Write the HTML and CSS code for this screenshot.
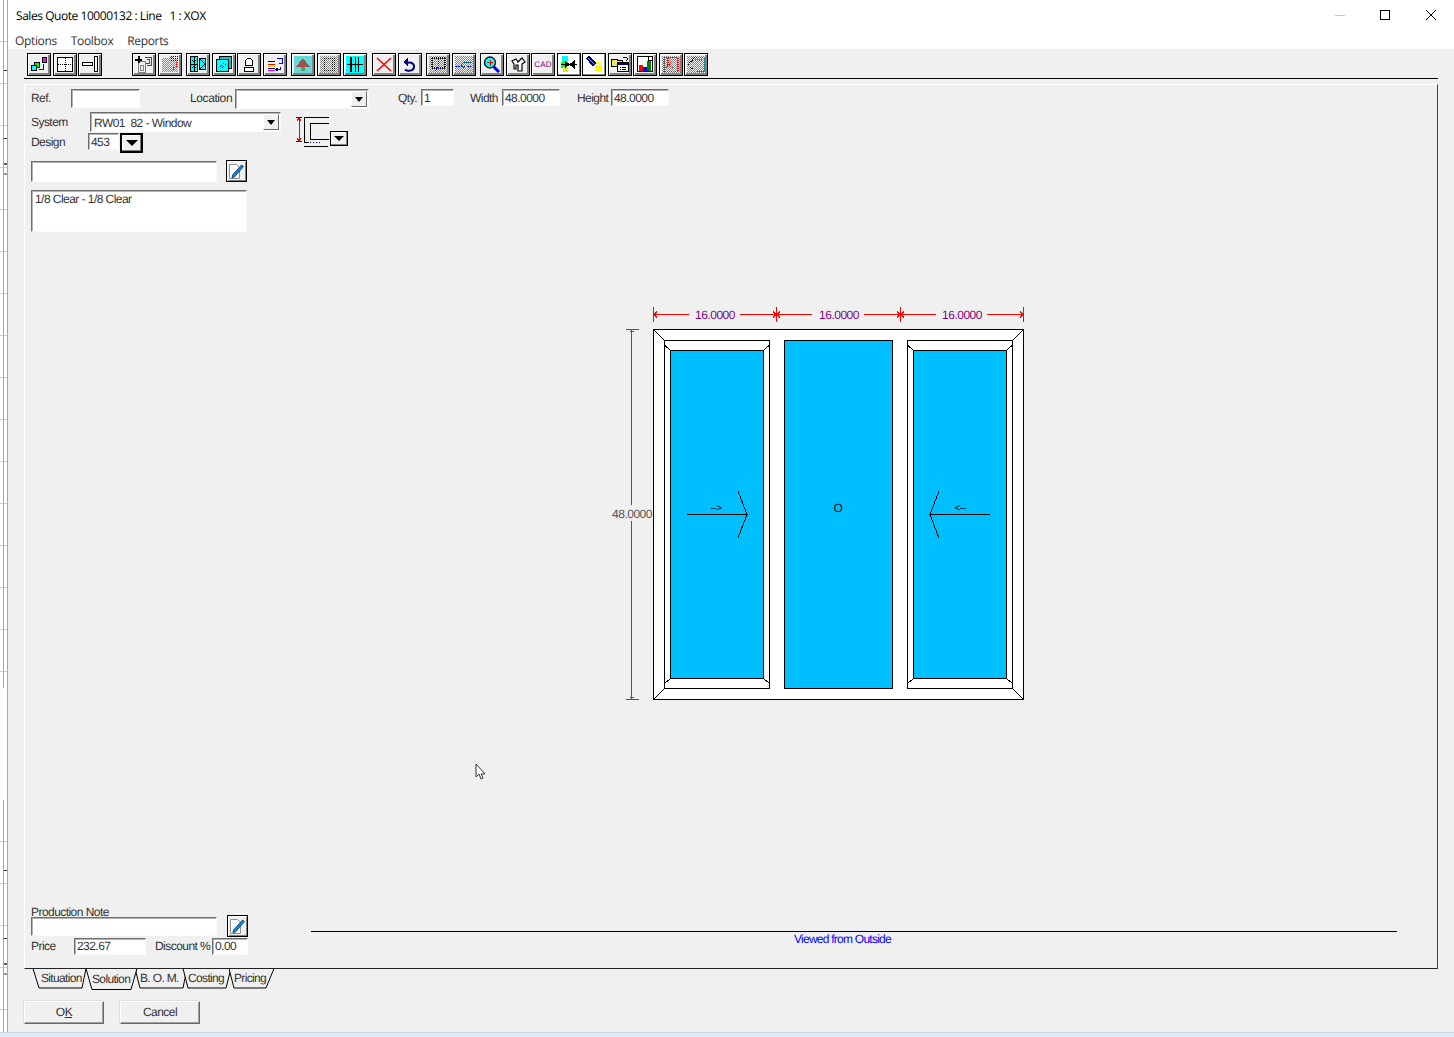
FILE: index.html
```html
<!DOCTYPE html>
<html lang="en">
<head>
  <meta charset="UTF-8" />
  <title>Sales Quote 10000132</title>
  <link rel="stylesheet" href="styles.css">
</head>
<body>
  <div class="strip">
    <div class="strip-grid"></div>
    <div class="strip-gap"></div>
    <div class="strip-grid strip-low"></div>
  </div>

  <div class="window">
    <div class="titlebar">
      <span class="title">Sales Quote 10000132 : Line   1 : XOX</span>
      <span class="winbtns">
        <svg width="111" height="31" viewBox="0 0 111 31">
          <path d="M0 15.5h10" stroke="#c8c8c8" fill="none" />
          <rect x="45.5" y="10.5" width="9" height="9" fill="none" stroke="#000" />
          <path d="M91 10l10 10M101 10l-10 10" stroke="#000" fill="none" />
        </svg>
      </span>
    </div>
    <div class="menubar">
      <span>Options</span>
      <span>Toolbox</span>
      <span>Reports</span>
    </div>

    <div class="toolbar">
      <button class="tb">
        <svg viewBox="0 0 18 17">
          <defs>
            <pattern id="dith" width="2" height="2" patternUnits="userSpaceOnUse">
              <rect width="2" height="2" fill="#f0f0f0" />
              <rect width="1" height="1" fill="#8a8a8a" />
              <rect x="1" y="1" width="1" height="1" fill="#8a8a8a" />
            </pattern>
            <pattern id="dots" width="2" height="2" patternUnits="userSpaceOnUse">
              <rect width="1" height="1" fill="#000" />
            </pattern>
          </defs>
          <rect x="4.5" y="6.5" width="5" height="5" fill="#0f0" stroke="#000" />
          <rect x="1.5" y="9.5" width="5" height="5" fill="#0ff" stroke="#000" />
          <rect x="12.5" y="1.5" width="4" height="5" fill="#f0f" stroke="#000" />
          <path d="M13.5 8v5.5H9" stroke="#00f" fill="none" />
        </svg>
      </button>
      <button class="tb tight">
        <svg viewBox="0 0 18 17">
          <rect x="1.5" y="1.5" width="15" height="14" fill="#fff" stroke="#000" />
          <path d="M2 8.5h14M9 2v13" stroke="#000" stroke-dasharray="1 1" fill="none" />
        </svg>
      </button>
      <button class="tb gap-wide">
        <svg viewBox="0 0 18 17">
          <rect x="1.5" y="6.5" width="10" height="3" fill="#fff" stroke="#000" />
          <rect x="13.5" y="0.5" width="3" height="15" fill="#fff" stroke="#000" />
        </svg>
      </button>

      <button class="tb">
        <svg viewBox="0 0 18 17">
          <rect x="3.5" y="5.5" width="7" height="11" fill="none" stroke="#808080" />
          <rect x="5.5" y="9.5" width="3" height="5" fill="none" stroke="#808080" />
          <path d="M10 1.5h6.5v8H12M11.5 3.5h3v4H11" stroke="#f00" fill="none" />
          <path d="M0 3.5h7M3.5 0v7" stroke="#000" stroke-width="2" fill="none" />
        </svg>
      </button>
      <button class="tb gap-mid">
        <svg viewBox="0 0 18 17">
          <rect x="1" y="2" width="16" height="14" fill="url(#dith)" />
          <rect x="10" y="0" width="7" height="5" fill="url(#dots)" />
          <path d="M9 1h3M15 6v5h-3v3h-2" stroke="#f00" stroke-dasharray="1 1" fill="none" />
        </svg>
      </button>

      <button class="tb">
        <svg viewBox="0 0 18 17">
          <rect x="1.5" y="0.5" width="7" height="15" fill="#0ff" stroke="#000" />
          <rect x="10.5" y="2.5" width="6" height="11" fill="#0ff" stroke="#000" />
          <path d="M5 1v14M3 4l2 2 2-2M3 12l2-2 2 2M2 8h6" stroke="#000" fill="none" />
          <path d="M11 3l5 5-5 5" stroke="#000" fill="none" />
        </svg>
      </button>
      <button class="tb tight">
        <svg viewBox="0 0 18 17">
          <rect x="4.5" y="0.5" width="12" height="12" fill="#0cc" stroke="#000" />
          <rect x="1.5" y="3.5" width="12" height="12" fill="#0ff" stroke="#000" />
          <path d="M5 11l4-4M7 12l4-4" stroke="#00f" stroke-dasharray="1 1" fill="none" />
        </svg>
      </button>
      <button class="tb">
        <svg viewBox="0 0 18 17">
          <path d="M5.5 9.5V4.5l2-2h3l2 2v5z" fill="#fff" stroke="#000" />
          <rect x="4.5" y="11.5" width="9" height="4" fill="#fff" stroke="#000" />
        </svg>
      </button>
      <button class="tb gap-mid">
        <svg viewBox="0 0 18 17">
          <path d="M2 5.5h7" stroke="#000" fill="none" />
          <path d="M2 8.5h7" stroke="#f00" fill="none" />
          <path d="M2 10.5h7" stroke="#e8e800" fill="none" />
          <path d="M2 12.5h7" stroke="#00f" fill="none" />
          <path d="M2 14.5h7" stroke="#f0f" fill="none" />
          <path d="M11 2.5h5.5v5H13M14 10.5v3h-3" stroke="#00f" fill="none" />
          <path d="M12 12l-2 1.5 2 1.5" stroke="#000" fill="none" />
        </svg>
      </button>
      <button class="tb">
        <svg viewBox="0 0 18 17">
          <rect x="0" y="0" width="18" height="17" fill="#66d9d9" />
          <path d="M9 2l7 9H2z" fill="#a05050" />
          <path d="M7 11h4v4H7z" fill="#58a058" />
        </svg>
      </button>
      <button class="tb">
        <svg viewBox="0 0 18 17">
          <rect x="0" y="0" width="18" height="17" fill="url(#dith)" />
          <rect x="3" y="1" width="12" height="15" fill="url(#dots)" />
          <rect x="6" y="3" width="6" height="11" fill="#f0f0f0" />
          <rect x="6" y="3" width="6" height="11" fill="url(#dith)" />
        </svg>
      </button>
      <button class="tb gap-big">
        <svg viewBox="0 0 18 17">
          <rect x="0" y="0" width="18" height="17" fill="#0ff" />
          <path d="M4.5 1v15M5.5 1v15M9.5 1v15M12.5 1v15M1 8.5h16" stroke="#000" fill="none" />
        </svg>
      </button>

      <button class="tb">
        <svg viewBox="0 0 18 17">
          <path d="M2 2l14 13M16 2L2 15" stroke="#f00" stroke-width="1.6" fill="none" shape-rendering="auto" />
        </svg>
      </button>
      <button class="tb gap-mid">
        <svg viewBox="0 0 18 17">
          <path d="M4 13.5c2 2 9 2 9-3 0-4-5-5-8-3" stroke="#000080" stroke-width="2" fill="none" shape-rendering="auto" />
          <path d="M7 1v10L2 6z" fill="#000080" />
        </svg>
      </button>

      <button class="tb">
        <svg viewBox="0 0 18 17">
          <rect x="0" y="0" width="18" height="17" fill="url(#dith)" />
          <path d="M2.5 2h13M2.5 12h13M2.5 2v10M15.5 2v10" stroke="#000" stroke-width="2" stroke-dasharray="1 1" fill="none" />
          <path d="M9 3v9M6 15l3-4 3 4" stroke="#00f" stroke-dasharray="1 1" fill="none" />
        </svg>
      </button>
      <button class="tb gap-mid">
        <svg viewBox="0 0 18 17">
          <rect x="0" y="0" width="18" height="17" fill="url(#dith)" />
          <path d="M0 10.5h16" stroke="#00f" stroke-dasharray="2 1" fill="none" />
          <path d="M16 6.5h-7M9 6l-3 3 3 3" stroke="#006060" fill="none" />
          <rect x="10" y="10" width="2" height="2" fill="#e8e800" />
        </svg>
      </button>

      <button class="tb">
        <svg viewBox="0 0 18 17">
          <path d="M10 10l6 6" stroke="#00f" stroke-width="3" fill="none" shape-rendering="auto" />
          <circle cx="7" cy="6.5" r="5.5" fill="#0ff" stroke="#000" stroke-width="1.3" shape-rendering="auto" />
          <path d="M4 6.5h6M7 3.5v6" stroke="#f00" fill="none" />
        </svg>
      </button>
      <button class="tb tight">
        <svg viewBox="0 0 18 17">
          <path d="M3 5l4-2 2 3 4-4 3 4-3 2v7h-4V9L7 9v4H5V8z" fill="#fff" stroke="#000" stroke-width="1.2" shape-rendering="auto" />
        </svg>
      </button>
      <button class="tb">
        <svg viewBox="0 0 18 17">
          <text x="9" y="11" class="cad">CAD</text>
        </svg>
      </button>
      <button class="tb tb-flat tight">
        <svg viewBox="0 0 18 17">
          <rect x="2" y="0" width="6" height="8" fill="#0ff" />
          <rect x="1" y="6" width="6" height="6" fill="#0f0" />
          <rect x="3" y="11" width="5" height="5" fill="#e8e800" />
          <path d="M1 8.5h6M5 5l4 3.5-4 3.5zM12 8.5h5M14 5l-4 3.5 4 3.5z" fill="#000" stroke="#000" />
        </svg>
      </button>
      <button class="tb tb-flat">
        <svg viewBox="0 0 18 17">
          <path d="M1 2l3-2 7 7-3 4z" fill="#000080" />
          <path d="M3 2l6 6" stroke="#8ac" fill="none" />
          <rect x="10" y="9" width="7" height="7" fill="#ff0" />
          <rect x="0" y="15" width="18" height="1" fill="#fff" />
          <path d="M11 6h6M12 8h5" stroke="#ff0" stroke-dasharray="1 1" fill="none" />
        </svg>
      </button>
      <button class="tb tight">
        <svg viewBox="0 0 18 17">
          <path d="M0 3.5h6l1 1h4v6H0z" fill="#e8e860" stroke="#000" />
          <path d="M12 1h3l2 2-2 2" stroke="#000" fill="none" />
          <rect x="6.5" y="6.5" width="11" height="9" fill="#fff" stroke="#000" />
          <rect x="7" y="7" width="10" height="2" fill="#000080" />
          <path d="M9 11h1M11 11h4M9 13h1M11 13h4" stroke="#000" fill="none" />
        </svg>
      </button>
      <button class="tb">
        <svg viewBox="0 0 18 17">
          <rect x="1.5" y="0.5" width="15" height="15" fill="#fff" stroke="#000" />
          <rect x="3" y="9" width="4" height="6" fill="#f00" />
          <rect x="7" y="11" width="4" height="4" fill="#00f" />
          <rect x="11" y="5" width="4" height="10" fill="#008000" />
          <path d="M12 1v3h4" stroke="#000" fill="none" />
        </svg>
      </button>
      <button class="tb tight">
        <svg viewBox="0 0 18 17">
          <rect x="0" y="0" width="18" height="17" fill="url(#dith)" />
          <path d="M2 1.5h14v14H2zM6 2v7l4-3M4 12l3-3 5 4" stroke="#f00" stroke-width="1.4" stroke-dasharray="1 1" fill="none" />
        </svg>
      </button>
      <button class="tb">
        <svg viewBox="0 0 18 17">
          <rect x="0" y="0" width="18" height="17" fill="url(#dith)" />
          <path d="M5 1.5h12v14H9" stroke="#006060" stroke-dasharray="1 1" fill="none" />
          <path d="M7 2L1 9l6 6" stroke="#000" stroke-dasharray="1 1" stroke-width="1.4" fill="none" />
          <path d="M8 4h7" stroke="#808000" stroke-width="2" stroke-dasharray="1 1" fill="none" />
        </svg>
      </button>
    </div>
    <div class="toolrule"></div>

    <div class="panel">
      <div class="row-top">
        <label class="lb-ref">Ref.</label>
        <input class="sunken in-ref" type="text">
        <label class="lb-loc">Location</label>
        <div class="sunken combo in-loc"><span></span><i class="drop"></i></div>
        <label class="lb-qty">Qty.</label>
        <input class="sunken in-qty" type="text" value="1">
        <label class="lb-width">Width</label>
        <input class="sunken in-dim" type="text" value="48.0000">
        <label class="lb-height">Height</label>
        <input class="sunken in-dim" type="text" value="48.0000">
      </div>

      <div class="content">
        <div class="side">
          <div class="upper">
            <div class="upper-left">
              <div class="row row-system">
                <label class="lb-system">System</label>
                <div class="sunken combo in-system"><span>RW01  82 - Window</span><i class="drop"></i></div>
              </div>
              <div class="row row-design">
                <label class="lb-design">Design</label>
                <input class="sunken in-design" type="text" value="453">
                <button class="design-btn"><i class="arrow"></i></button>
              </div>
              <div class="row row-note">
                <input class="sunken in-note" type="text">
                <button class="edit-btn">
                  <svg width="17" height="18" viewBox="0 0 17 18">
                    <path d="M1.5 16.5V2.5h7l3 3v11z" fill="#fcfcfc" stroke="#909090" />
                    <path d="M4 16l.5-3 9-10 2 1.500-9 10.500z" fill="#0a84e0" stroke="#002850" stroke-width=".7" />
                  </svg>
                </button>
              </div>
              <textarea class="sunken glass">1/8 Clear - 1/8 Clear</textarea>
            </div>
            <div class="profile">
              <svg width="52" height="30" viewBox="0 0 52 30">
                <path d="M0 .5h6M0 24.500h6" stroke="#00f" fill="none" />
                <path d="M3 1v23M1 4l2-3 2 3M1 21l2 3 2-3" stroke="#f00" fill="none" />
                <path d="M8.500 0v25M33 .5H8M33 6.500H14.500v16H33M8 25.500h5M8 29.500h24" stroke="#000" fill="none" />
                <path d="M14 25.500h12" stroke="#00f" stroke-dasharray="1 2" fill="none" />
              </svg>
              <button class="profile-btn"><i class="arrow"></i></button>
            </div>
          </div>

          <div class="lower">
            <label class="lb-prod">Production Note</label>
            <div class="row row-prod">
              <input class="sunken in-note in-prod" type="text">
              <button class="edit-btn edit-prod">
                <svg width="17" height="18" viewBox="0 0 17 18">
                  <path d="M1.5 16.5V2.5h7l3 3v11z" fill="#fcfcfc" stroke="#909090" />
                  <path d="M4 16l.5-3 9-10 2 1.500-9 10.500z" fill="#0a84e0" stroke="#002850" stroke-width=".7" />
                </svg>
              </button>
            </div>
            <div class="row row-price">
              <label class="lb-price">Price</label>
              <input class="sunken in-price" type="text" value="232.67">
              <label class="lb-disc">Discount %</label>
              <input class="sunken in-disc" type="text" value="0.00">
            </div>
          </div>
        </div>

        <div class="view">
          <svg class="drawing" width="420" height="410" viewBox="610 300 420 410">
            <!-- frame -->
            <rect x="653.5" y="329.5" width="370" height="370" fill="#fff" stroke="#000" />
            <path d="M653.5 329.5l11 11M1023.5 329.5l-11 11M653.5 699.5l11-11M1023.5 699.5l-11-11" stroke="#000" fill="none" />

            <!-- left sash -->
            <rect x="664.5" y="340.5" width="105" height="348" fill="#fff" stroke="#000" />
            <rect x="670.5" y="350.5" width="93" height="328" fill="#00bfff" stroke="#000" />
            <path d="M664.5 345l6 5.5M769.5 345l-6 5.5M664.5 683.5l6-5M769.5 683.5l-6-5" stroke="#000" fill="none" />

            <!-- fixed lite -->
            <rect x="784.5" y="340.5" width="108" height="348" fill="#00bfff" stroke="#000" />

            <!-- right sash -->
            <rect x="907.5" y="340.5" width="105" height="348" fill="#fff" stroke="#000" />
            <rect x="913.5" y="350.5" width="93" height="328" fill="#00bfff" stroke="#000" />
            <path d="M907.5 345l6 5.5M1012.5 345l-6 5.5M907.5 683.5l6-5M1012.5 683.5l-6-5" stroke="#000" fill="none" />

            <!-- slide arrows -->
            <path d="M687 514.5h60M738 491l9 23.5-9 23.5" stroke="#000" fill="none" />
            <path d="M990 514.5h-60M939 491l-9 23.5 9 23.5" stroke="#000" fill="none" />
            <text class="mark" x="716" y="511">--&gt;</text>
            <text class="mark mark-o" x="838" y="512">O</text>
            <text class="mark" x="960" y="511">&lt;--</text>

            <!-- width dims -->
            <g stroke="#f00" fill="none">
              <path d="M653.5 307v15M776.5 307v15M900.5 307v15M1023.5 307v15" />
              <path d="M653 314.5h36M740 314.5h72M864 314.5h72M987 314.5h37" />
              <path d="M654 314.5l3-3M654 314.5l3 3M773 311.5l3 3-3 3M780 311.5l-3 3 3 3M897 311.5l3 3-3 3M904 311.5l-3 3 3 3M1023 314.5l-3-3M1023 314.5l-3 3" />
            </g>
            <text class="dim" x="715" y="319">16.0000</text>
            <text class="dim" x="839" y="319">16.0000</text>
            <text class="dim" x="962" y="319">16.0000</text>

            <!-- height dim -->
            <g stroke="#555" fill="none">
              <path d="M626 329.5h13M626 699.5h13" />
              <path d="M631.5 330v175M631.5 521v178" />
              <path d="M629.5 331.5h4M629.5 697.5h4" />
            </g>
            <text class="dim-h" x="632" y="518">48.0000</text>
          </svg>

          <div class="viewrule"></div>
          <div class="caption">Viewed from Outside</div>
        </div>
      </div>

      <svg class="cursor" width="12" height="18" viewBox="0 0 12 18">
        <path d="M1 1v13l3-3 2 5 2-1-2-4h4z" fill="#fff" stroke="#333" />
      </svg>
    </div>

    <svg class="tabs" width="260" height="24" viewBox="24 968 260 24">
      <g fill="#f0f0f0" stroke="#000">
        <path d="M33 968.5l6 19.5h43l4-19.5" />
        <path d="M135 968.5l5 19.5h43l4-19.5" />
        <path d="M183 968.5l5 19.5h38l5-19.5" />
        <path d="M229 968.5l5 19.5h32l8-19.5" />
        <path d="M86 968.5l6 21h39l6-21" />
      </g>
      <text class="tabtext" x="41" y="982">Situation</text>
      <text class="tabtext" x="92" y="983">Solution</text>
      <text class="tabtext" x="140" y="982">B. O. M.</text>
      <text class="tabtext" x="188" y="982">Costing</text>
      <text class="tabtext" x="234" y="982">Pricing</text>
    </svg>

    <div class="actions">
      <button class="action">O<u>K</u></button>
      <button class="action">Cancel</button>
    </div>
  </div>

  <div class="taskstrip"></div>
</body>
</html>
```

FILE: styles.css
```css
html,
body {
  margin: 0;
  height: 1037px;
  overflow: hidden;
}
body {
  display: grid;
  grid-template-columns: 8px 1fr;
  grid-template-rows: 1032px 5px;
  background: #f0f0f0;
  font-family: "Liberation Sans", Arial, sans-serif;
  font-size: 12px;
  letter-spacing: -0.55px;
  color: #333;
  text-rendering: geometricPrecision;
}
button,
input,
textarea {
  font: inherit;
  letter-spacing: inherit;
  color: inherit;
  text-rendering: inherit;
}

/* window behind this one */
.strip {
  display: flex;
  flex-direction: column;
  background: #fff;
  border-right: 1px solid #a8a8a8;
  box-sizing: border-box;
}
.strip-grid {
  height: 688px;
  background:
    linear-gradient(#333, #333) 4px 70px / 3px 1px no-repeat,
    linear-gradient(#333, #333) 4px 138px / 3px 1px no-repeat,
    linear-gradient(#666, #666) 4px 163px / 3px 2px no-repeat,
    linear-gradient(#999, #999) 4px 173px / 3px 2px no-repeat,
    linear-gradient(90deg, transparent 3px, #a8a8a8 3px, #a8a8a8 4px, transparent 4px),
    repeating-linear-gradient(#fff 0, #fff 41px, #d0d0d0 41px, #d0d0d0 42px);
}
.strip-gap {
  height: 112px;
}
.strip-low {
  flex: 1;
  height: auto;
}

.window {
  display: flex;
  flex-direction: column;
  min-width: 0;
}
.titlebar {
  height: 31px;
  background: #fff;
  display: flex;
  align-items: center;
  padding-left: 8px;
  font-family: "Open Sans", sans-serif;
  letter-spacing: -0.45px;
  color: #000;
}
.title {
  white-space: pre;
}
.winbtns {
  margin-left: auto;
  margin-right: 8px;
  height: 31px;
}
.menubar {
  height: 18px;
  background: #fff;
  display: flex;
  gap: 14px;
  padding-left: 7px;
  font-family: "Open Sans", sans-serif;
  letter-spacing: -0.35px;
  line-height: 20px;
}

.toolbar {
  display: flex;
  padding: 4px 0 2px 19px;
}
.tb {
  width: 24px;
  height: 23px;
  margin-right: 2px;
  padding: 0;
  box-sizing: border-box;
  display: flex;
  align-items: center;
  justify-content: center;
  background: #f0f0f0;
  border: 1px solid #000;
  box-shadow: inset 1px 1px 0 #fff, inset -2px -2px 0 #808080;
}
.tb svg {
  width: 18px;
  height: 17px;
  margin: -1px 0 0 -1px;
  shape-rendering: crispEdges;
  overflow: hidden;
}
.tb-flat {
  background: #fff;
  box-shadow: inset -1px -1px 0 #808080;
}
.tight {
  margin-right: 1px;
}
.gap-mid {
  margin-right: 4px;
}
.gap-big {
  margin-right: 5px;
}
.gap-wide {
  margin-right: 30px;
}
.cad {
  font-family: "Liberation Sans", sans-serif;
  font-size: 8px;
  letter-spacing: 0.2px;
  fill: #800080;
  text-anchor: middle;
}
.toolrule {
  height: 1px;
  margin: 0 16px;
  background: #000;
}

/* main tab page */
.panel {
  position: relative;
  height: 885px;
  margin: 5px 16px 0;
  box-sizing: border-box;
  border-left: 1px solid #fff;
  border-top: 1px solid #fff;
  border-right: 1px solid #444;
  border-bottom: 1px solid #222;
  display: flex;
  flex-direction: column;
  padding: 4px 0 0 6px;
}
label {
  white-space: nowrap;
}
.sunken {
  box-sizing: border-box;
  display: block;
  padding: 0 2px;
  margin: 0;
  background: #fff;
  border: 1px solid;
  border-color: #6e6e6e #fbfbfb #fbfbfb #6e6e6e;
  box-shadow: inset 1px 1px 0 #b4b4b4;
  outline: none;
  border-radius: 0;
  white-space: pre;
}
.row-top {
  display: flex;
  align-items: flex-start;
  height: 23px;
}
.row-top label {
  line-height: 18px;
}
.lb-ref {
  width: 40px;
}
.in-ref {
  width: 69px;
  height: 19px;
}
.lb-loc {
  width: 45px;
  margin-left: 50px;
  letter-spacing: -0.4px;
}
.in-loc {
  width: 134px;
  height: 20px;
}
.lb-qty {
  width: 23px;
  margin-left: 29px;
}
.in-qty {
  width: 33px;
  height: 17px;
}
.lb-width {
  width: 32px;
  margin-left: 16px;
}
.in-dim {
  width: 58px;
  height: 17px;
}
.lb-height {
  width: 34px;
  margin-left: 17px;
}
.combo {
  display: flex;
  align-items: center;
  justify-content: space-between;
  padding-right: 1px;
}
.in-system span {
  padding: 1px 0 0 1px;
}
.drop {
  width: 16px;
  height: 16px;
  box-sizing: border-box;
  background: #f0f0f0;
  border: 1px solid;
  border-color: #fff #696969 #696969 #fff;
  display: flex;
  align-items: center;
  justify-content: center;
}
.drop::after,
.arrow {
  display: block;
  width: 0;
  height: 0;
  border: 4px solid transparent;
  border-top: 5px solid #000;
  border-bottom: 0;
  content: "";
}
.arrow {
  border-width: 6px 6px 0;
  border-top-color: #000;
}

.content {
  flex: 1;
  display: flex;
  min-height: 0;
}
.side {
  width: 280px;
  flex: none;
  display: flex;
  flex-direction: column;
  justify-content: space-between;
  padding-bottom: 13px;
}
.upper {
  display: flex;
}
.upper-left {
  width: 265px;
  flex: none;
}
.row {
  display: flex;
  align-items: center;
}
.row-system {
  height: 20px;
  margin-bottom: 1px;
}
.lb-system {
  width: 59px;
}
.in-system {
  width: 191px;
  height: 20px;
}
.row-design {
  height: 20px;
  align-items: flex-start;
  margin-bottom: 7px;
}
.row-design label {
  line-height: 19px;
}
.lb-design {
  width: 57px;
}
.in-design {
  width: 31px;
  height: 17px;
}
.design-btn {
  width: 23px;
  height: 20px;
  margin-left: 1px;
  padding: 0;
  box-sizing: border-box;
  background: #f0f0f0;
  border: 2px solid #000;
  box-shadow: inset -1px -1px 0 #808080, inset 1px 1px 0 #fff;
  display: flex;
  align-items: center;
  justify-content: center;
}
.row-note {
  margin-bottom: 8px;
}
.in-note {
  width: 186px;
  height: 21px;
}
.edit-btn {
  width: 21px;
  height: 22px;
  margin-left: 9px;
  padding: 0;
  box-sizing: border-box;
  background: #f0f0f0;
  border: 1px solid #000;
  box-shadow: inset 1px 1px 0 #fff, inset -1px -1px 0 #808080;
  display: flex;
  align-items: center;
  justify-content: center;
}
.edit-prod {
  margin-left: 10px;
  margin-top: -2px;
}
.glass {
  display: block;
  width: 216px;
  height: 42px;
  resize: none;
  overflow: hidden;
  padding: 1px 3px;
}
.profile {
  display: flex;
  align-items: flex-start;
  margin-top: 5px;
  height: 30px;
}
.profile svg {
  shape-rendering: crispEdges;
  flex: none;
}
.profile-btn {
  width: 18px;
  height: 15px;
  flex: none;
  margin: 14px 0 0 -18px;
  padding: 0;
  box-sizing: border-box;
  background: #f0f0f0;
  border: 1px solid #000;
  box-shadow: inset -1px -1px 0 #808080, inset 1px 1px 0 #fff;
  display: flex;
  align-items: center;
  justify-content: center;
}
.profile-btn .arrow {
  border-width: 5px 5px 0;
}
.lb-prod {
  display: block;
  height: 11px;
  line-height: 12px;
}
.row-prod {
  height: 19px;
  margin-bottom: 2px;
}
.in-prod {
  height: 19px;
}
.row-price label {
  margin-top: -1px;
}
.lb-price {
  width: 43px;
}
.in-price {
  width: 72px;
  height: 17px;
  padding-bottom: 1px;
}
.lb-disc {
  width: 57px;
  margin-left: 9px;
}
.in-disc {
  width: 36px;
  height: 17px;
  padding-bottom: 1px;
}

.view {
  flex: 1;
  display: flex;
  flex-direction: column;
  margin-right: 40px;
  min-width: 0;
}
.drawing {
  display: block;
  margin: 188px 0 0 299px;
  shape-rendering: crispEdges;
  flex: none;
}
.drawing text {
  font-size: 12px;
  letter-spacing: -0.5px;
  text-anchor: middle;
  shape-rendering: auto;
}
.mark {
  fill: #000;
}
.drawing .mark {
  font-size: 10px;
}
.drawing .mark-o {
  font-size: 12px;
}
.dim {
  fill: #800080;
}
.dim-h {
  fill: #555;
}
.viewrule {
  height: 1px;
  margin-top: auto;
  background: #000;
}
.caption {
  color: #00f;
  margin: 0 0 22px 483px;
  line-height: 14px;
  letter-spacing: -0.75px;
}
.cursor {
  position: absolute;
  left: 450px;
  top: 678px;
}

.tabs {
  display: block;
  flex: none;
  margin: -1px 0 0 16px;
}
.tabtext {
  fill: #333;
  font-size: 12px;
  letter-spacing: -0.65px;
}
.actions {
  display: flex;
  gap: 16px;
  margin: 9px 0 0 16px;
}
.action {
  width: 80px;
  height: 23px;
  padding: 0 0 2px;
  box-sizing: border-box;
  background: #f0f0f0;
  border: 1px solid;
  border-color: #fff #696969 #696969 #fff;
  box-shadow: -1px -1px 0 #e0e0e0, inset -1px -1px 0 #a0a0a0;
}
.taskstrip {
  grid-column: 1 / -1;
  background: #dfe9f5;
  border-top: 1px solid #c8d4e4;
}
```
